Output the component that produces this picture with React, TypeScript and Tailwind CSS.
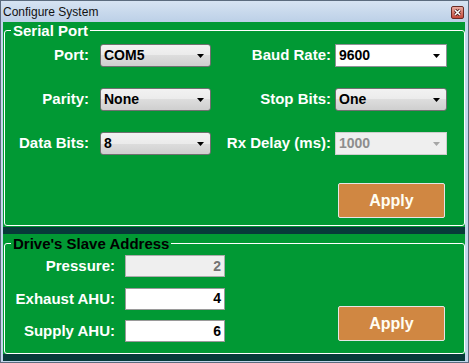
function Arrow({ color = "#000" }: { color?: string }) {
  return (
    <svg width="7" height="4" viewBox="0 0 7 4">
      <polygon points="0,0 7,0 3.5,4" fill={color} />
    </svg>
  );
}

type ComboKind = "list" | "edit" | "disabled";

function Combo({ value, kind = "list", width }: { value: string; kind?: ComboKind; width: string }) {
  const skin =
    kind === "list"
      ? "rounded-[3px] border-[#707070] bg-[linear-gradient(#f2f2f2,#ebebeb_50%,#dddddd_50%,#cfcfcf)] text-black"
      : kind === "edit"
        ? "border-[#8f9196] bg-white text-black"
        : "border-[#cdcdcd] bg-[#efefef] text-[#8d8d8d]";
  return (
    <div className={`flex h-[23px] items-center justify-between border pl-[3px] pr-[6px] text-[14px] font-bold ${skin} ${width}`}>
      <span>{value}</span>
      <Arrow color={kind === "disabled" ? "#a6a6a6" : "#000"} />
    </div>
  );
}

function FieldLabel({ text, width }: { text: string; width: string }) {
  return <div className={`text-right text-[15px] font-bold text-white ${width}`}>{text}</div>;
}

function NumberBox({ value, disabled }: { value: string; disabled?: boolean }) {
  return (
    <div
      className={`flex h-[22px] w-[100px] items-center justify-end border pr-[3px] text-[14px] font-bold ${
        disabled ? "border-[#acacac] bg-[#efefef] text-[#737373]" : "border-[#9a9a9a] bg-white text-black"
      }`}
    >
      {value}
    </div>
  );
}

function ApplyButton() {
  return (
    <button className="flex h-[35px] w-[107px] items-center justify-center rounded-[2px] border border-[#e6e6e6] bg-[#d08742] text-[16px] font-bold text-[#fffdf2]">
      Apply
    </button>
  );
}

export default function App() {
  return (
    <div className="flex h-[363px] w-[469px] flex-col border border-[#5b6b7e] bg-[#c2d6ec] font-['Liberation_Sans',Arial,sans-serif]">
      {/* title bar */}
      <div className="flex h-[21px] items-center justify-between bg-[linear-gradient(#d6e3f2,#bcd0e7)] pl-[2px] pr-[4px]">
        <span className="text-[12px] text-[#111]">Configure System</span>
        <div className="mt-[1px] flex h-[13px] w-[13px] items-center justify-center rounded-[2px] border border-[#6a2a24] bg-[linear-gradient(#e9aaa0,#c4483b)]">
          <svg width="7" height="7" viewBox="0 0 7 7">
            <path d="M1 1L6 6M6 1L1 6" stroke="#3a1010" strokeWidth="3" />
            <path d="M1 1L6 6M6 1L1 6" stroke="#fff" strokeWidth="1.6" />
          </svg>
        </div>
      </div>

      <div className="flex flex-1 flex-col pb-[1px] pl-[2px] pr-[3px]">
        {/* serial port */}
        <div className="h-[205px] bg-[#019934]">
          <fieldset className="ml-[1px] h-[204px] w-[461px] rounded-[3px] border border-white">
            <legend className="ml-[6px] px-[2px] text-[15px] font-bold leading-[17px] text-white">Serial Port</legend>
            <div className="flex flex-col gap-[21px] pt-[5px]">
              <div className="flex items-center">
                <FieldLabel text="Port:" width="w-[84px]" />
                <div className="ml-[11px]"><Combo value="COM5" width="w-[111px]" /></div>
                <FieldLabel text="Baud Rate:" width="w-[120px]" />
                <div className="ml-[4px]"><Combo value="9600" kind="edit" width="w-[112px]" /></div>
              </div>
              <div className="flex items-center">
                <FieldLabel text="Parity:" width="w-[84px]" />
                <div className="ml-[11px]"><Combo value="None" width="w-[111px]" /></div>
                <FieldLabel text="Stop Bits:" width="w-[120px]" />
                <div className="ml-[4px]"><Combo value="One" width="w-[112px]" /></div>
              </div>
              <div className="flex items-center">
                <FieldLabel text="Data Bits:" width="w-[84px]" />
                <div className="ml-[11px]"><Combo value="8" width="w-[111px]" /></div>
                <FieldLabel text="Rx Delay (ms):" width="w-[120px]" />
                <div className="ml-[4px]"><Combo value="1000" kind="disabled" width="w-[112px]" /></div>
              </div>
            </div>
            <div className="mr-[19px] mt-[28px] flex justify-end">
              <ApplyButton />
            </div>
          </fieldset>
        </div>

        <div className="h-[7px] bg-[#073a39]" />

        {/* slave address */}
        <div className="h-[120px] bg-[#019934] pt-[1px]">
          <fieldset className="ml-[1px] h-[119px] w-[461px] rounded-[3px] border border-white">
            <legend className="ml-[6px] px-[2px] text-[15px] font-bold leading-[17px] text-black">Drive's Slave Address</legend>
            <div className="flex justify-between pr-[19px] pt-[3px]">
              <div className="flex flex-col gap-[10px]">
                <div className="flex items-center gap-[10px]">
                  <FieldLabel text="Pressure:" width="w-[110px]" />
                  <NumberBox value="2" disabled />
                </div>
                <div className="flex items-center gap-[10px]">
                  <FieldLabel text="Exhaust AHU:" width="w-[110px]" />
                  <NumberBox value="4" />
                </div>
                <div className="flex items-center gap-[10px]">
                  <FieldLabel text="Supply AHU:" width="w-[110px]" />
                  <NumberBox value="6" />
                </div>
              </div>
              <div className="mt-[51px]">
                <ApplyButton />
              </div>
            </div>
          </fieldset>
        </div>

        <div className="h-[7px] bg-[#073a39]" />
      </div>
    </div>
  );
}
